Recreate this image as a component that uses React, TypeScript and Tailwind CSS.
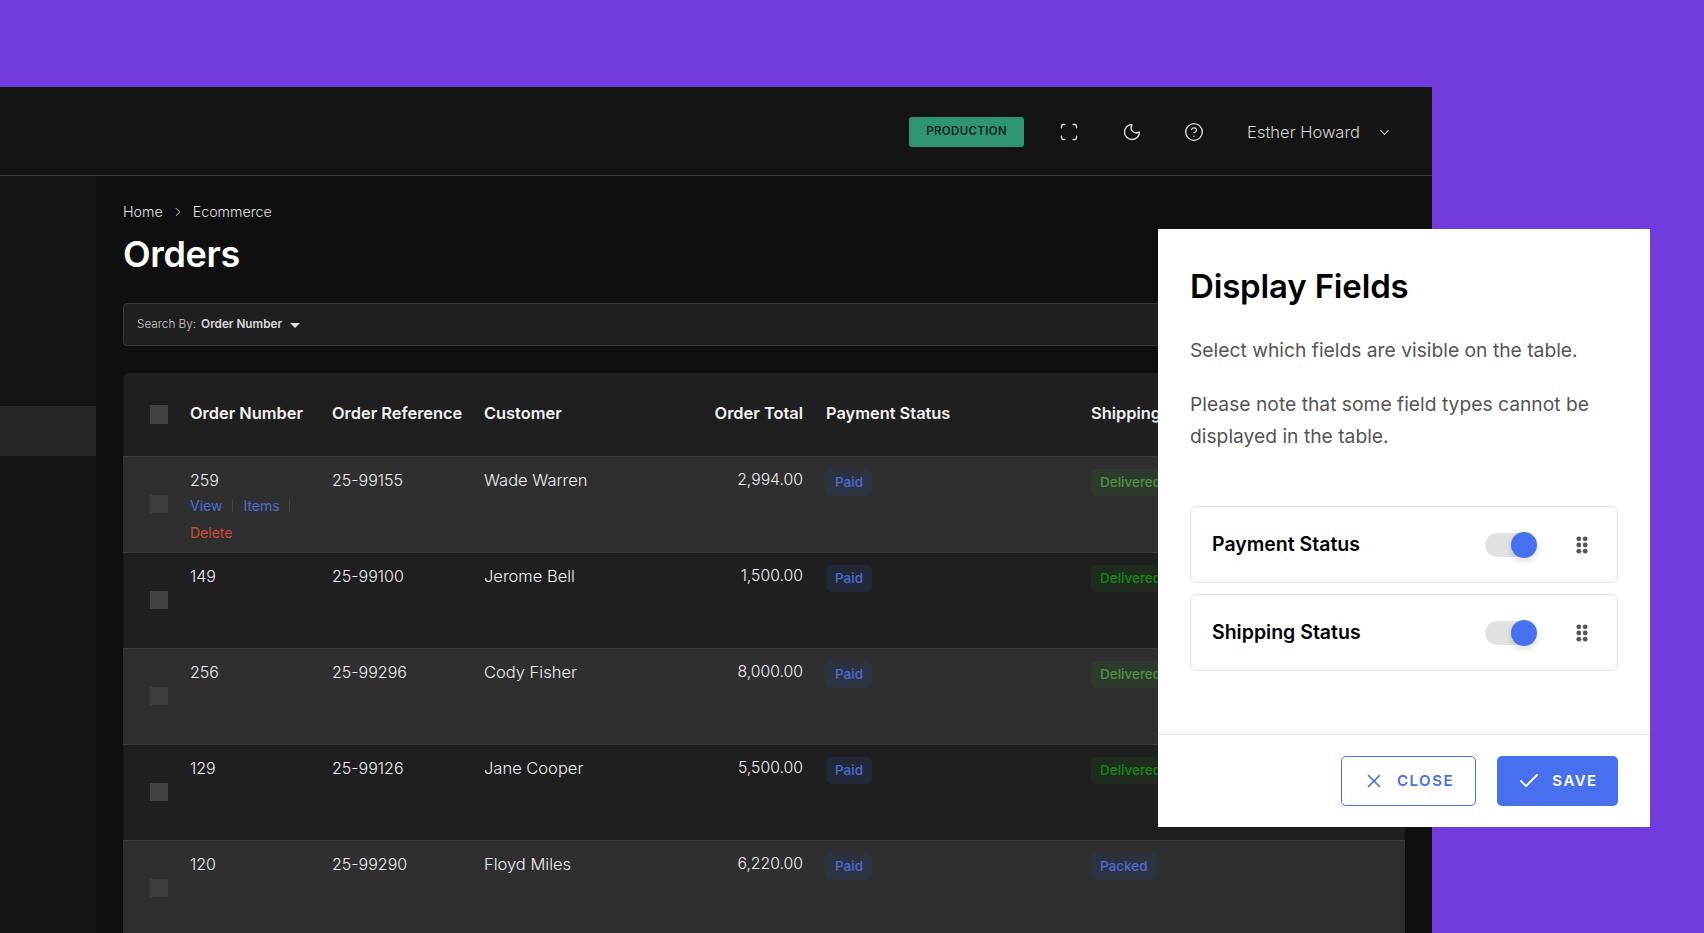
import { Check, ChevronDown, ChevronRight, CircleHelp, Moon, Scan, X } from "lucide-react";

const orders = [
  { id: "259", ref: "25-99155", customer: "Wade Warren", total: "2,994.00", shipping: "Delivered", actions: true },
  { id: "149", ref: "25-99100", customer: "Jerome Bell", total: "1,500.00", shipping: "Delivered" },
  { id: "256", ref: "25-99296", customer: "Cody Fisher", total: "8,000.00", shipping: "Delivered" },
  { id: "129", ref: "25-99126", customer: "Jane Cooper", total: "5,500.00", shipping: "Delivered" },
  { id: "120", ref: "25-99290", customer: "Floyd Miles", total: "6,220.00", shipping: "Packed" },
];

const fields = ["Payment Status", "Shipping Status"];

const DragDots = () => (
  <svg width="12" height="18" viewBox="0 0 12 18" className="fill-[#555555]">
    <circle cx="2.8" cy="2.8" r="2.4" />
    <circle cx="9.2" cy="2.8" r="2.4" />
    <circle cx="2.8" cy="9" r="2.4" />
    <circle cx="9.2" cy="9" r="2.4" />
    <circle cx="2.8" cy="15.2" r="2.4" />
    <circle cx="9.2" cy="15.2" r="2.4" />
  </svg>
);

const Badge = ({ label, odd }: { label: string; odd: boolean }) => {
  const green = label === "Delivered";
  const tone = green
    ? odd
      ? "bg-[#2f3a2f] text-[#46963e]"
      : "bg-[#1f2b1f] text-[#128a12]"
    : odd
      ? "bg-[#2d3240] text-[#4a6cd4]"
      : "bg-[#232838] text-[#4a6cd4]";
  return (
    <span className={`inline-flex h-[27px] items-center rounded-[5px] px-[9px] text-[13.5px] font-medium ${tone}`}>
      {label}
    </span>
  );
};

export default function App() {
  return (
    <div className="relative h-[933px] w-[1704px] overflow-hidden bg-[#723bdb] pt-[87px] font-['Inter',sans-serif]">
      <div className="h-[846px] w-[1432px] overflow-hidden bg-[#0f0f0f]">
        {/* Top bar */}
        <header className="flex h-[89px] items-center justify-end border-b border-[#3a3a3a] bg-[#141414] pr-[40px] pt-[2px]">
          <span className="flex h-[30px] w-[115px] items-center justify-center rounded-[3px] bg-[#2f9474] text-[11.5px] font-semibold tracking-[0.03em] text-[#10261f]">
            PRODUCTION
          </span>
          <Scan size={20} strokeWidth={1.6} className="ml-[35px] text-[#e0e0e0]" />
          <Moon size={20} strokeWidth={1.6} className="ml-[43px] text-[#e0e0e0]" />
          <CircleHelp size={20} strokeWidth={1.6} className="ml-[42px] text-[#e0e0e0]" />
          <span className="ml-[43px] text-[16.5px] font-light text-[#d6d6d6]">Esther Howard</span>
          <ChevronDown size={15} strokeWidth={1.8} className="ml-[17px] text-[#d6d6d6]" />
        </header>

        <div className="flex">
          {/* Sidebar */}
          <aside className="h-[760px] w-[96px] shrink-0 bg-[#141414] pt-[230px]">
            <div className="h-[50px] bg-[#262626]" />
          </aside>

          {/* Main */}
          <main className="min-w-0 flex-1 px-[27px] pt-[25px]">
            <nav className="flex h-[22px] items-center text-[14.25px] font-light text-[#e4e4e4]">
              <span>Home</span>
              <ChevronRight size={14} strokeWidth={1.6} className="mx-[8px]" />
              <span>Ecommerce</span>
            </nav>
            <h1 className="mt-[6px] h-[50px] text-[36px] font-semibold leading-[50px] tracking-[-0.01em] text-white">
              Orders
            </h1>

            <div className="mt-[24px] flex h-[43px] items-center rounded-[4px] border border-[#383838] bg-[#1f1f1f] pl-[13px] pt-[1px] text-[11.75px]">
              <span className="font-light text-[#cfcfcf]">Search By:</span>
              <span className="ml-[5px] font-semibold text-[#dddddd]">Order Number</span>
              <span className="ml-[8px] h-0 w-0 border-x-[5px] border-t-[5px] border-x-transparent border-t-[#e0e0e0]" />
            </div>

            <div className="mt-[27px] rounded-t-[6px] bg-[#1f1f1f]">
              {/* Table head */}
              <div className="grid h-[83px] grid-cols-[67px_142px_152px_156px_163px_288px_1fr] items-start pt-[28px] text-[16.4px] font-semibold text-[#f2f2f2]">
                <span className="ml-[27px] mt-[4px] h-[19px] w-[18px] bg-[#414141]" />
                <span>Order Number</span>
                <span>Order Reference</span>
                <span>Customer</span>
                <span className="text-right">Order Total</span>
                <span className="pl-[23px]">Payment Status</span>
                <span>Shipping Status</span>
              </div>

              {/* Rows */}
              {orders.map((order, i) => {
                const odd = i % 2 === 0;
                return (
                  <div
                    key={order.id}
                    className={`grid h-[96px] grid-cols-[67px_142px_152px_156px_163px_288px_1fr] border-t border-[#3b3b3b] pt-[11px] text-[16px] font-light text-[#f0f0f0] ${
                      odd ? "bg-[#2f2f2f]" : "bg-[#1f1f1f]"
                    }`}
                  >
                    <span
                      className={`ml-[27px] mt-[27px] h-[18px] w-[18px] ${odd ? "bg-[#3c3c3c]" : "bg-[#414141]"}`}
                    />
                    <div>
                      <div className="h-[24px] leading-[24px]">{order.id}</div>
                      {order.actions && (
                        <div className="text-[14px] font-normal leading-[21px]">
                          <div className="mt-[3px] flex items-center text-[#4a6cd4]">
                            <span>View</span>
                            <span className="mx-[10px] h-[13px] w-px bg-[#444444]" />
                            <span>Items</span>
                            <span className="ml-[9px] h-[13px] w-px bg-[#444444]" />
                          </div>
                          <div className="mt-[6px] text-[#d04a3a]">Delete</div>
                        </div>
                      )}
                    </div>
                    <span className="h-[24px] leading-[24px]">{order.ref}</span>
                    <span className="h-[24px] text-[16.5px] leading-[24px]">{order.customer}</span>
                    <span className="h-[24px] text-right text-[15.75px] leading-[24px]">{order.total}</span>
                    <div className="pl-[23px] pt-[1px]">
                      <Badge label="Paid" odd={odd} />
                    </div>
                    <div className="pt-[1px]">
                      <Badge label={order.shipping} odd={odd} />
                    </div>
                  </div>
                );
              })}
            </div>
          </main>
        </div>
      </div>

      {/* Display fields dialog */}
      <section className="absolute left-[1158px] top-[229px] flex h-[598px] w-[492px] flex-col bg-white">
        <div className="flex-1 px-[32px] pt-[31px]">
          <h2 className="text-[33px] font-semibold leading-[52px] tracking-[-0.005em] text-black">Display Fields</h2>
          <p className="mt-[22px] text-[19.25px] leading-[32px] text-[#555555]">
            Select which fields are visible on the table.
          </p>
          <p className="mt-[22px] text-[19.25px] leading-[32px] text-[#555555]">
            Please note that some field types cannot be displayed in the table.
          </p>
          <div className="mt-[54px] flex flex-col gap-[11px]">
            {fields.map((field) => (
              <div
                key={field}
                className="flex h-[77px] items-center rounded-[6px] border border-[#e4e4e4] pl-[21px] pr-[29px]"
              >
                <span className="flex-1 text-[19.5px] font-semibold text-black">{field}</span>
                <span className="relative mr-[39px] h-[24px] w-[52px] rounded-full bg-[#e2e2e2]">
                  <span className="absolute -top-[1px] right-0 h-[26px] w-[26px] rounded-full bg-[#4770ee] shadow-[0_3px_6px_rgba(0,0,0,0.15)]" />
                </span>
                <DragDots />
              </div>
            ))}
          </div>
        </div>
        <div className="flex h-[93px] justify-end gap-[21px] border-t border-[#e4e4e4] pr-[32px] pt-[21px]">
          <button className="flex h-[50px] w-[135px] items-center justify-center rounded-[5px] border border-[#4770ee] text-[15px] font-semibold tracking-[0.1em] text-[#4770ee]">
            <X size={22} strokeWidth={1.8} className="mr-[12px]" />
            CLOSE
          </button>
          <button className="flex h-[50px] w-[121px] items-center justify-center rounded-[5px] bg-[#4770ee] text-[15px] font-semibold tracking-[0.1em] text-white">
            <Check size={24} strokeWidth={1.8} className="mr-[11px]" />
            SAVE
          </button>
        </div>
      </section>
    </div>
  );
}
